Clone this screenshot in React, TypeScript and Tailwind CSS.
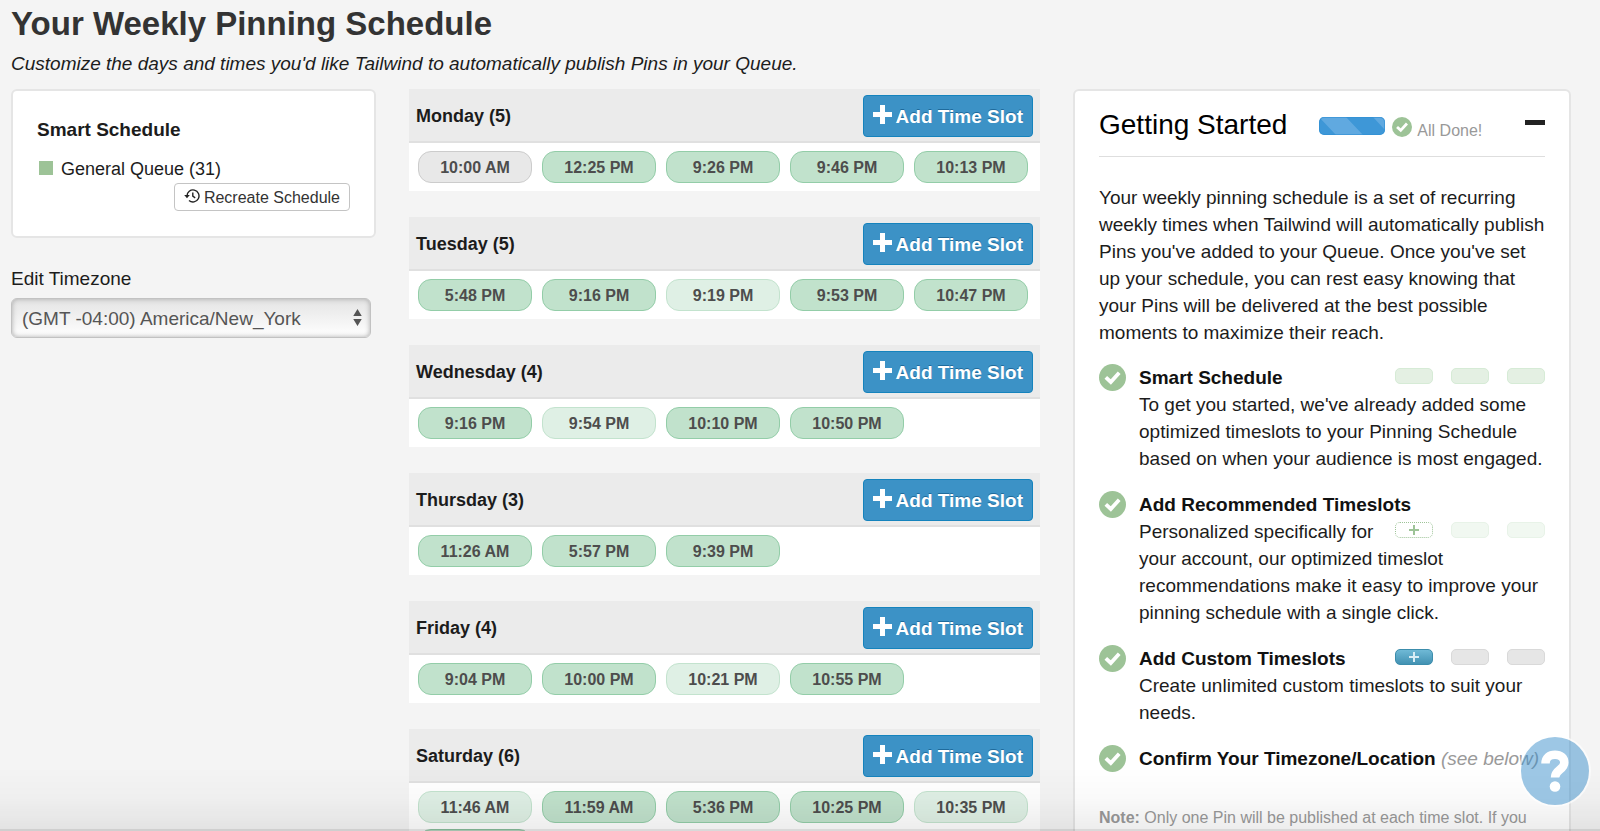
import React from "react";

type Slot = {
  time: string,
  kind: "base" | "light" | "gray"
};

type Day = {
  name: string,
  slots: Slot[]
};

const base = (time: string): Slot => ({ time, kind: "base" });
const light = (time: string): Slot => ({ time, kind: "light" });
const gray = (time: string): Slot => ({ time, kind: "gray" });

const days: Day[] = [
  { name: "Monday", slots: [gray("10:00 AM"), base("12:25 PM"), base("9:26 PM"), base("9:46 PM"), base("10:13 PM")] },
  { name: "Tuesday", slots: [base("5:48 PM"), base("9:16 PM"), light("9:19 PM"), base("9:53 PM"), base("10:47 PM")] },
  { name: "Wednesday", slots: [base("9:16 PM"), light("9:54 PM"), base("10:10 PM"), base("10:50 PM")] },
  { name: "Thursday", slots: [base("11:26 AM"), base("5:57 PM"), base("9:39 PM")] },
  { name: "Friday", slots: [base("9:04 PM"), base("10:00 PM"), light("10:21 PM"), base("10:55 PM")] },
  { name: "Saturday", slots: [light("11:46 AM"), base("11:59 AM"), base("5:36 PM"), base("10:25 PM"), light("10:35 PM"), base("")] },
];

const slotColors = {
  base: "bg-[#c1e2cc] border-[#93cda8]",
  light: "bg-[#dff0e5] border-[#c3e3ce]",
  gray: "bg-[#e8e8e8] border-[#cccccc]",
};

const miniColors = {
  green: "bg-[#e4f0e3] border-[#d6ebd6]",
  pale: "bg-[#f1f8f1] border-[#e8f3e8]",
  gray: "bg-[#e6e6e6] border-[#d9d9d9]",
  dotted: "border-dotted border-[#9dc397] text-[#9dc397]",
  blue: "bg-linear-to-b from-[#6fb9d6] to-[#4292b3] border-[#3c8dac] text-[#d9edf5]",
};

function Check({ className }: { className: string }) {
  return (
    <svg viewBox="0 0 27 27" className={className} aria-hidden="true">
      <circle cx="13.5" cy="13.5" r="13.5" fill="#9dc397" />
      <path d="M6.8 13.4 L11.8 18 L20.2 8.800" fill="none" stroke="#fff" strokeWidth="3.8" />
    </svg>
  );
}

function Plus({ className }: { className: string }) {
  return (
    <svg viewBox="0 0 19 19" className={className} aria-hidden="true">
      <path d="M7 0h5v7h7v5h-7v7H7v-7H0V7h7z" fill="currentColor" />
    </svg>
  );
}

function MiniPills({ kinds }: { kinds: (keyof typeof miniColors)[] }) {
  return (
    <div className="float-right mt-1 flex gap-[18px]">
      {kinds.map((kind, i) => (
        <span key={i} className={`flex h-4 w-[38px] items-center justify-center rounded-[5px] border ${miniColors[kind]}`}>
          {(kind === "dotted" || kind === "blue") && (
            <svg viewBox="0 0 10 10" className="size-[10px]" aria-hidden="true">
              <path d="M4 0h2v4h4v2H6v4H4V6H0V4h4z" fill="currentColor" />
            </svg>
          )}
        </span>
      ))}
    </div>
  );
}

function Step({ children }: { children: React.ReactNode }) {
  return (
    <li className="mb-[19px] flex gap-[13px]">
      <Check className="size-[27px] shrink-0" />
      <div className="flex-1">{children}</div>
    </li>
  );
}

function DayCard({ day }: { day: Day }) {
  return (
    <section className="mb-[26px]">
      <header className="flex items-center justify-between border-b-2 border-[#e0e0e0] bg-[#ebebeb] pt-[6px] pr-[7px] pb-1 pl-[7px]">
        <h2 className="text-[18px] font-bold">{day.name} ({day.slots.length})</h2>
        <button className="flex h-[42px] items-center gap-1 rounded-[4px] border border-[#1583bd] bg-[#3c92c6] px-[9px] text-[19px] font-bold text-white text-shadow-[0_-1px_0_#1f6b9c]">
          <Plus className="mb-1 size-[19px]" />
          Add Time Slot
        </button>
      </header>
      <div className="flex flex-wrap gap-x-[10px] gap-y-[6px] bg-white px-[9px] py-2">
        {day.slots.map((slot, i) => (
          <button key={i} className={`h-8 w-[114px] rounded-[13px] border text-[16px] font-bold text-[#4d4d4d] ${slotColors[slot.kind]}`}>
            {slot.time}
          </button>
        ))}
      </div>
    </section>
  );
}

function App() {
  return (
    <div className="relative h-screen overflow-hidden bg-[#f4f4f4] pr-[29px] pl-[11px] font-['Liberation_Sans',Arial,sans-serif] text-[19px] leading-[27px] text-[#1c1c1c]">
      <h1 className="pt-1 text-[33px] leading-[40px] font-bold text-[#333]">Your Weekly Pinning Schedule</h1>
      <p className="pt-[6px] italic">Customize the days and times you'd like Tailwind to automatically publish Pins in your Queue.</p>

      <div className="mt-3 grid grid-cols-[365fr_631fr_498fr] items-start gap-x-[33px]">
        <aside>
          <div className="rounded-[6px] border-2 border-[#e5e5e5] bg-white px-6 pt-[25px] pb-[25px]">
            <h2 className="font-bold">Smart Schedule</h2>
            <div className="mt-[13px] flex items-center gap-2 pl-[2px] text-[18px]">
              <span className="mb-1 size-[14px] bg-[#9dc397]" />
              General Queue (31)
            </div>
            <button className="ml-auto flex h-7 items-center gap-1 rounded-[4px] border border-[#c4c4c4] bg-white px-[9px] text-[16px] text-[#333]">
              <svg viewBox="0 0 16 14" className="mb-[3px] h-[14px] w-4" fill="none" stroke="#222" strokeWidth="1.4" aria-hidden="true">
                <path d="M3 7a6 6 0 1 1 2 4.4M8.8 3.6v3.6l2.4 1.6" />
                <path d="M.2 6h5.6L3 9.2z" fill="#222" stroke="none" />
              </svg>
              Recreate Schedule
            </button>
          </div>
          <label htmlFor="timezone" className="mt-[27px] block">Edit Timezone</label>
          <div className="relative mt-[6px] mr-[5px]">
            <select id="timezone" className="h-10 w-full appearance-none rounded-[6px] border border-[#c2c2c2] bg-linear-to-b from-[#e4e4e4] to-white px-[10px] text-[19px] text-[#555] shadow-[inset_0_0_5px_#aaa]">
              <option>(GMT -04:00) America/New_York</option>
            </select>
            <svg viewBox="0 0 8 16" className="pointer-events-none absolute top-[11px] right-[9px] h-[17px] w-[9px]" fill="#555" aria-hidden="true">
              <path d="M4 0l4 6.5H0zM4 16l4-6.5H0z" />
            </svg>
          </div>
        </aside>

        <main>
          {days.map((day) => <DayCard key={day.name} day={day} />)}
        </main>

        <aside className="rounded-[6px] border-2 border-[#e5e5e5] bg-white px-6 pt-[14px]">
          <header className="mb-[27px] flex h-[52px] border-b border-[#dedede] pt-[2px]">
            <h2 className="text-[28px] leading-[36px] text-black">Getting Started</h2>
            <div className="mt-[10px] ml-8 flex items-start">
              <svg viewBox="0 0 66 18" className="h-[18px] w-[66px] rounded-[5px]" role="img" aria-label="Progress">
                <rect width="66" height="18" fill="#3e97d7" />
                <path d="M0 0h27l17 18H17zM54 0h12v13z" fill="#60a9e0" />
                <rect x=".5" y=".5" width="65" height="17" rx="4.500" fill="none" stroke="#2f8fd4" strokeOpacity=".6" />
              </svg>
              <Check className="ml-[7px] size-5" />
              <span className="ml-[5px] text-[16px] text-[#999]">All Done!</span>
            </div>
            <button aria-label="Collapse" className="mt-[13px] ml-auto h-[5px] w-5 bg-[#222]" />
          </header>
          <p>
            Your weekly pinning schedule is a set of recurring weekly times when Tailwind will automatically publish Pins you've added to your Queue. Once you've set up your schedule, you can rest easy knowing that your Pins will be delivered at the best possible moments to maximize their reach.
          </p>
          <ul className="mt-[18px]">
            <Step>
              <MiniPills kinds={["green", "green", "green"]} />
              <h3 className="font-bold text-[#111]">Smart Schedule</h3>
              To get you started, we've already added some optimized timeslots to your Pinning Schedule based on when your audience is most engaged.
            </Step>
            <Step>
              <h3 className="font-bold text-[#111]">Add Recommended Timeslots</h3>
              <MiniPills kinds={["dotted", "pale", "pale"]} />
              Personalized specifically for your account, our optimized timeslot recommendations make it easy to improve your pinning schedule with a single click.
            </Step>
            <Step>
              <MiniPills kinds={["blue", "gray", "gray"]} />
              <h3 className="font-bold text-[#111]">Add Custom Timeslots</h3>
              Create unlimited custom timeslots to suit your needs.
            </Step>
            <Step>
              <span className="whitespace-nowrap">
                <strong className="text-[#111]">Confirm Your Timezone/Location</strong> <em className="text-[#999]">(see below)</em>
              </span>
            </Step>
          </ul>
          <p className="mt-8 pb-6 text-[16px] text-[#999]">
            <strong>Note:</strong> Only one Pin will be published at each time slot. If you
          </p>
        </aside>
      </div>

      <div className="pointer-events-none absolute inset-x-0 bottom-0 h-[64px] border-b-2 border-black/15 bg-linear-to-b from-transparent via-black/2 to-black/7" />
      <button aria-label="Help" className="absolute right-[11px] bottom-[26px] flex size-[68px] items-center justify-center rounded-full bg-[#3b8fcb]/50 shadow-[0_0_0_2px_rgba(255,255,255,0.6)]">
        <svg viewBox="0 0 28 42" className="h-[42px] w-7" aria-hidden="true">
          <path d="M4.500 13.500C4.500 7.500 8.500 4.700 14 4.700s9.300 3 9.300 8c0 7-9.300 7-9.300 14.800" fill="none" stroke="#fff" strokeWidth="8.500" />
          <circle cx="14" cy="36.500" r="5.300" fill="#fff" />
        </svg>
      </button>
    </div>
  );
}

export default App;
